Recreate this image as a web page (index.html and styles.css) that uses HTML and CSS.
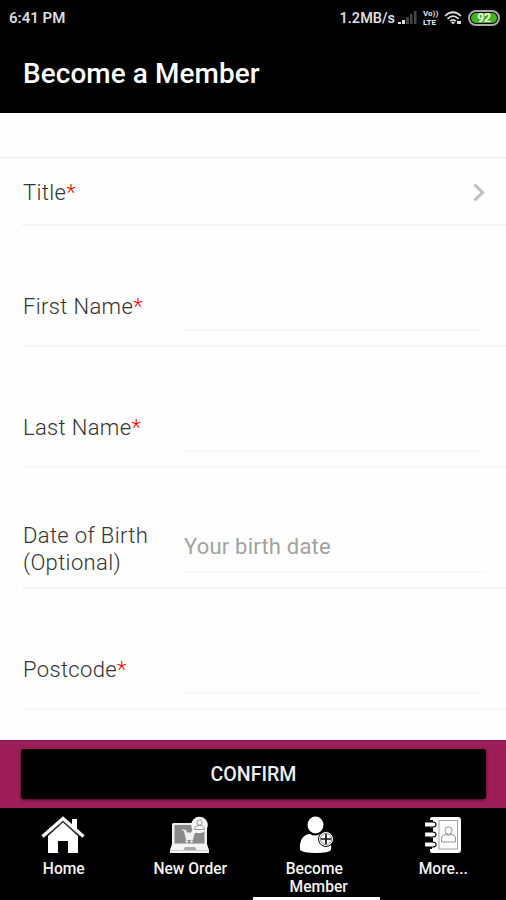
FILE: index.html
```
<!DOCTYPE html>
<html lang="en">
<head>
  <meta charset="UTF-8" />
  <title>Become a Member</title>
  <meta name="viewport" content="width=device-width, initial-scale=1" />
  <link rel="stylesheet" href="styles.css">
</head>
<body>

  <!-- HEADER -->
  <header>
    <div class="status-bar">
      <span class="clock">6:41 PM</span>
      <div class="status-right">
        <span class="speed">1.2MB/s</span>
        <svg class="signal" width="19" height="14" viewBox="0 0 19 14">
          <path fill="#ddd" d="M0 11h3v2H0zM4 9h3v4H4z"/>
          <path fill="#444" d="M8 6h3v7H8zM12 3h2.500v10H12zM16 0h2.500v13H16z"/>
        </svg>
        <div class="volte">
          <span>Vo))</span>
          <span>LTE</span>
        </div>
        <svg class="wifi" width="19" height="14" viewBox="0 0 19 14" fill="none" stroke="#ddd" stroke-width="1.700">
          <path d="M1 5Q9 -2.500 17 5M3.500 7.800Q9 2.500 14.500 7.800M6 10.200Q9 7.500 12 10.200"/>
          <path fill="#ddd" stroke="none" d="M7 11.200q2-1.600 4 0l-2 2.300zM13 10h4v3h-4z"/>
        </svg>
        <span class="battery"><span>92</span></span>
      </div>
    </div>
    <h1>Become a Member</h1>
  </header>

  <!-- FORM -->
  <main>
    <div class="row row-title">
      <label>Title<span class="req">*</span></label>
      <svg class="chevron" width="12" height="19" viewBox="0 0 12 19" fill="none" stroke="#bfbfbf" stroke-width="3">
        <path d="M1.500 1.500L9.500 9.500L1.500 17.500"/>
      </svg>
    </div>
    <div class="row">
      <label>First Name<span class="req">*</span></label>
      <input type="text">
    </div>
    <div class="row">
      <label>Last Name<span class="req">*</span></label>
      <input type="text">
    </div>
    <div class="row">
      <label>Date of Birth (Optional)</label>
      <input type="text" placeholder="Your birth date">
    </div>
    <div class="row">
      <label>Postcode<span class="req">*</span></label>
      <input type="text">
    </div>
  </main>

  <!-- CONFIRM -->
  <div class="confirm-bar">
    <button class="btn-confirm">CONFIRM</button>
  </div>

  <!-- TABS -->
  <nav>
    <a class="tab">
      <svg width="44" height="38" viewBox="0 0 44 38">
        <path fill="#fff" d="M31 3h5v11l-5-5z"/>
        <path fill="none" stroke="#fff" stroke-width="3.200" d="M1.500 20.500L22 2.500L42.500 20.500"/>
        <path fill="#fff" d="M22 6.500L37 20V37H27V25H17V37H7V20z"/>
        <path fill="none" stroke="#777" stroke-width="0.800" d="M5 20L22 5.500L39 20"/>
      </svg>
      <span>Home</span>
    </a>
    <a class="tab">
      <svg width="44" height="38" viewBox="0 0 44 38">
        <rect x="4" y="7" width="35" height="23" rx="1.500" fill="#eee"/>
        <rect x="6.500" y="9" width="30" height="18.500" fill="#8a8a8a"/>
        <path fill="#f4f4f4" d="M4 28h35l2 6v3H2v-3z"/>
        <path fill="#aaa" d="M17 31h10l1.500 3h-13z"/>
        <path stroke="#bbb" stroke-width="0.700" d="M2 34.500H41"/>
        <path fill="#eee" d="M14 13.500l4 .500 1 2.500h6l1.500-3 1 .500-2.500 10h-7l-2-9-2-.500z"/>
        <circle cx="18.800" cy="25.500" r="1.300" fill="#eee"/>
        <circle cx="23.500" cy="25.500" r="1.300" fill="#eee"/>
        <path fill="#f4f4f4" d="M23 17.500l2-6 6 5z"/>
        <circle cx="31.500" cy="9" r="8.300" fill="#f4f4f4"/>
        <g fill="none" stroke="#999" stroke-width="1">
          <circle cx="31.500" cy="6.500" r="2.600"/>
          <path d="M26.500 13.500q0-4 5-4t5 4z"/>
        </g>
      </svg>
      <span>New Order</span>
    </a>
    <a class="tab active">
      <svg width="44" height="38" viewBox="0 0 44 38">
        <ellipse cx="21.500" cy="9" rx="8" ry="8.500" fill="#fff"/>
        <path fill="#fff" d="M6 34q-1-12 6-15q3-1.500 4-1q5 3 10 0q5 1 8 4q4 5 3 12q-2 3-15 3T6 34z"/>
        <circle cx="32" cy="23" r="7.500" fill="#fff" stroke="#000" stroke-width="1"/>
        <circle cx="32" cy="23" r="5.600" fill="#fff" stroke="#555" stroke-width="0.700"/>
        <path stroke="#111" stroke-width="1.700" d="M32 18v10M27 23h10"/>
      </svg>
      <span>Become <br>&nbsp;Member</span>
    </a>
    <a class="tab">
      <svg width="44" height="38" viewBox="0 0 44 38">
        <path fill="#fff" d="M11 1h26q3 0 3 3v30q0 3-3 3H11q-2 0-2-3V4q0-3 2-3z"/>
        <path d="M8 4h4v3H8zM8 11.500h4v4.500H8zM8 21.500h4V26H8zM8 31h3v2H8z"/>
        <path fill="#fff" stroke="#000" stroke-width="1.200" d="M3.500 6h8q3.500 0 3.500 2.500t-3.500 2.500h-8zM3.500 16h8q3.500 0 3.500 2.500t-3.500 2.500h-8zM3.500 26h8q3.500 0 3.500 2.500t-3.500 2.500h-8z"/>
        <rect x="18" y="4.500" width="18.500" height="28.500" fill="#fff" stroke="#888" stroke-width="0.800"/>
        <g fill="none" stroke="#888" stroke-width="0.900">
          <circle cx="27.500" cy="14.500" r="3.600"/>
          <path d="M20.500 26v-3q0-4.500 4.500-4.500q2.500 2 5 0q4.500 0 4.500 4.500v3z"/>
        </g>
      </svg>
      <span>More...</span>
    </a>
  </nav>

</body>
</html>
```

FILE: styles.css
```
* {
  box-sizing: border-box;
}

body {
  margin: 0;
  height: 900px;
  font-family: Roboto, "Liberation Sans", sans-serif;
  background-color: #fefefe;
  display: flex;
  flex-direction: column;
  overflow: hidden;
}

/* HEADER */
header {
  height: 113px;
  background-color: #000;
  color: #fff;
  flex: none;
}

.status-bar {
  height: 36px;
  padding: 0 6px 0 9px;
  display: flex;
  justify-content: space-between;
  align-items: center;
  color: #ddd;
  font-size: 14.5px;
  font-weight: 600;
}

.clock {
  font-size: 15px;
}

.status-right {
  display: flex;
  align-items: center;
}

.signal {
  margin: 0 6px 0 3px;
}

.volte {
  width: 16px;
  display: flex;
  flex-direction: column;
  font-size: 8px;
  line-height: 9px;
  font-weight: 800;
}

.wifi {
  margin: 0 5px;
}

.battery {
  width: 32px;
  height: 16px;
  padding: 1px;
  border: 2px solid #aaa;
  border-radius: 8px;
  display: flex;
}

.battery span {
  flex: 1;
  border-radius: 5px;
  background-color: #43b516;
  color: #fff;
  font-size: 12px;
  line-height: 10px;
  text-align: center;
}

h1 {
  margin: 0;
  padding: 20px 23px 0;
  font-size: 27.9px;
  line-height: 35px;
  font-weight: 500;
  letter-spacing: 0.1px;
}

/* FORM */
main {
  flex: 1;
  padding-top: 44px;
}

.row {
  height: 121px;
  margin-left: 23px;
  padding: 42px 22px 0 0;
  border-bottom: 2px solid #f5f5f5;
  display: flex;
}

.row-title {
  height: 69px;
  margin-left: 0;
  padding: 0 21px 0 23px;
  border-top: 2px solid #f3f3f3;
  border-bottom: none;
  justify-content: space-between;
  align-items: center;
  background: linear-gradient(#f5f5f5, #f5f5f5) 23px 100% / 100% 2px no-repeat;
}

label {
  width: 161px;
  padding-right: 30px;
  align-self: center;
  color: #333;
  font-size: 22px;
  line-height: 27px;
  font-weight: 350;
  letter-spacing: 0.35px;
}

.req {
  color: #f00;
}

input {
  flex: 1;
  min-width: 0;
  height: 63px;
  padding: 12px 0 0;
  border: none;
  border-bottom: 2px solid #f8f8f8;
  background: none;
  font-family: inherit;
  font-size: 22px;
  letter-spacing: 0.2px;
}

input::placeholder {
  color: #a2a2a2;
}

/* CONFIRM */
.confirm-bar {
  height: 68px;
  padding: 8px 20px 10px 21px;
  background-color: #9d1d57;
  border-top: 1px solid #861447;
  flex: none;
}

.btn-confirm {
  width: 100%;
  height: 50px;
  padding: 0;
  border: none;
  border-radius: 3px;
  background-color: #000;
  box-shadow: 0 1px 3px rgba(0, 0, 0, 0.6);
  color: #eee;
  font-family: inherit;
  font-size: 19.6px;
  font-weight: 500;
}

/* TABS */
nav {
  height: 92px;
  background-color: #000;
  display: flex;
  flex: none;
}

.tab {
  flex: 1;
  padding-top: 8px;
  border-bottom: 3px solid #000;
  color: #f4f4f4;
  display: flex;
  flex-direction: column;
  align-items: center;
  font-size: 15.6px;
  line-height: 18px;
  font-weight: 500;
}

.tab span {
  margin: 6px 0 0 1px;
  white-space: pre;
}

.tab.active {
  border-bottom-color: #fff;
}
```
